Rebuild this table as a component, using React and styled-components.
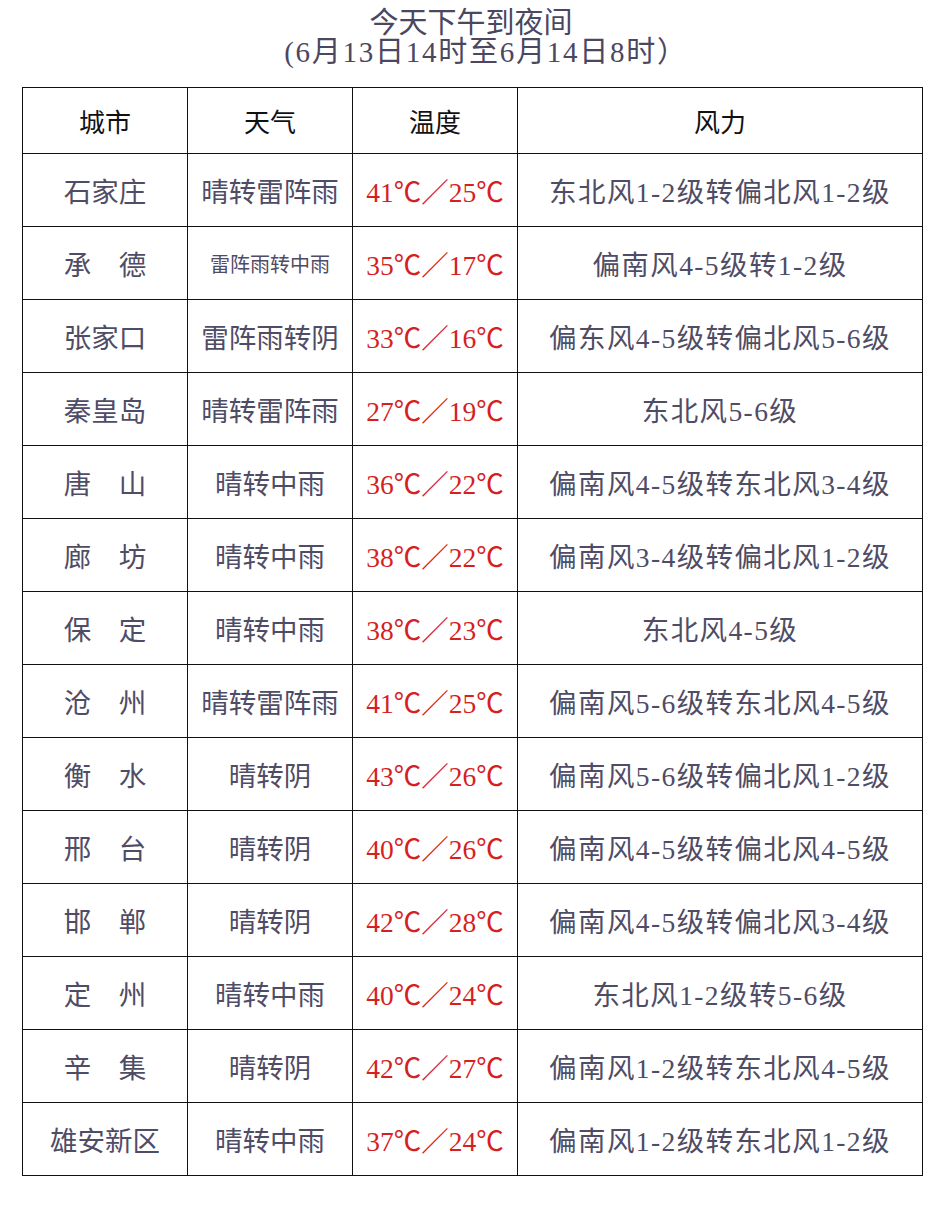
import React from 'react'
import styled, { createGlobalStyle } from 'styled-components'

const GlobalStyle = createGlobalStyle`
  body {
    margin: 0;
    background: #fff;
    font-family: "Liberation Serif", "Noto Sans CJK SC", serif;
  }
`

const Page = styled.div`
  width: 942px;
  padding-top: 9px;
  box-sizing: border-box;
`

const Title = styled.div`
  text-align: center;
  color: #4b4760;
  font-size: 29px;
  line-height: 29px;
  padding-left: ${p => p.$shift || 0}px;
  letter-spacing: ${p => p.$spacing || 0}px;
`

const Table = styled.div`
  display: grid;
  grid-template-columns: 165px 165px 165px 1fr;
  grid-template-rows: 66px;
  grid-auto-rows: 73px;
  width: 901px;
  margin: 20px 0 0 22px;
  border-top: 1px solid #111;
  border-left: 1px solid #111;
  box-sizing: border-box;
`

const Cell = styled.div`
  display: flex;
  align-items: center;
  justify-content: center;
  border-right: 1px solid #111;
  border-bottom: 1px solid #111;
  white-space: nowrap;
  font-size: ${p => p.$size || 27.5}px;
  letter-spacing: ${p => (p.$wide ? 1.4 : 0)}px;
  color: ${p => (p.$head ? '#111' : p.$red ? '#d61f1f' : '#4f4c66')};
`

const rows = [
  ['石家庄', '晴转雷阵雨', '41℃／25℃', '东北风1-2级转偏北风1-2级'],
  ['承　德', '雷阵雨转中雨', '35℃／17℃', '偏南风4-5级转1-2级'],
  ['张家口', '雷阵雨转阴', '33℃／16℃', '偏东风4-5级转偏北风5-6级'],
  ['秦皇岛', '晴转雷阵雨', '27℃／19℃', '东北风5-6级'],
  ['唐　山', '晴转中雨', '36℃／22℃', '偏南风4-5级转东北风3-4级'],
  ['廊　坊', '晴转中雨', '38℃／22℃', '偏南风3-4级转偏北风1-2级'],
  ['保　定', '晴转中雨', '38℃／23℃', '东北风4-5级'],
  ['沧　州', '晴转雷阵雨', '41℃／25℃', '偏南风5-6级转东北风4-5级'],
  ['衡　水', '晴转阴', '43℃／26℃', '偏南风5-6级转偏北风1-2级'],
  ['邢　台', '晴转阴', '40℃／26℃', '偏南风4-5级转偏北风4-5级'],
  ['邯　郸', '晴转阴', '42℃／28℃', '偏南风4-5级转偏北风3-4级'],
  ['定　州', '晴转中雨', '40℃／24℃', '东北风1-2级转5-6级'],
  ['辛　集', '晴转阴', '42℃／27℃', '偏南风1-2级转东北风4-5级'],
  ['雄安新区', '晴转中雨', '37℃／24℃', '偏南风1-2级转东北风1-2级'],
]

const App = () => {
  return (
    <Page>
      <GlobalStyle />
      <Title>今天下午到夜间</Title>
      <Title $spacing={1.75} $shift={30}>(6月13日14时至6月14日8时）</Title>
      <Table>
        {['城市', '天气', '温度', '风力'].map(h => (
          <Cell key={h} $head $size={26}>{h}</Cell>
        ))}
        {rows.map(([city, weather, temp, wind]) => (
          <React.Fragment key={city}>
            <Cell>{city}</Cell>
            <Cell $size={weather.length > 5 ? 20 : 27.5}>{weather}</Cell>
            <Cell $red>{temp}</Cell>
            <Cell $wide>{wind}</Cell>
          </React.Fragment>
        ))}
      </Table>
    </Page>
  )
}

export default App
